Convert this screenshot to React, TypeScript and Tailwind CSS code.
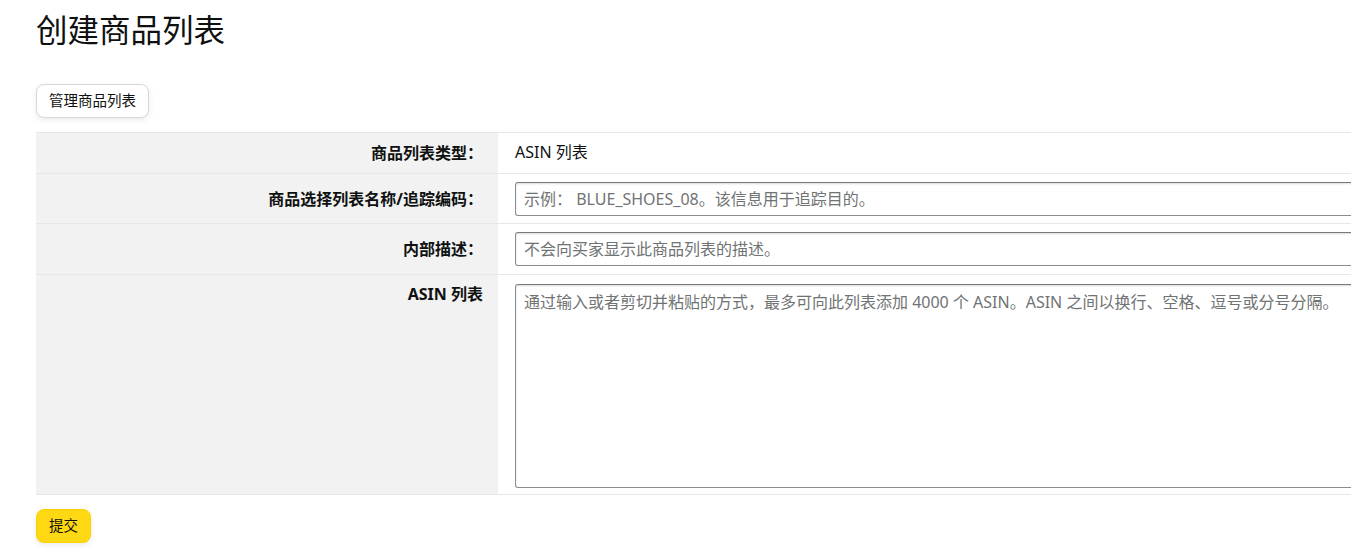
import { useState } from "react";

const font = { fontFamily: '"Noto Sans", "Noto Sans CJK SC", sans-serif' };

const fieldCls =
  "w-[1000px] rounded-[3px] border border-[#888c8c] border-t-[#767a7a] px-[8px] text-[16px] text-[#0f1111] placeholder:text-[#6f7373] shadow-[inset_0_1px_2px_rgba(15,17,17,0.15)] outline-none";

function Row({
  label,
  children,
  className,
  top,
}: {
  label: string;
  children: React.ReactNode;
  className: string;
  top?: boolean;
}) {
  return (
    <div className={`flex border-b border-[#e7e7e7] ${className}`}>
      <div
        className={`w-[462px] shrink-0 bg-[#f2f2f2] pr-[15px] text-right text-[16px] font-bold leading-[22px] text-[#0f1111] flex justify-end ${
          top ? "items-start pt-[8px]" : "items-center"
        }`}
      >
        {label}
      </div>
      <div className={`flex-1 pl-[17px] flex ${top ? "items-start pt-[9px]" : "items-center"}`}>
        {children}
      </div>
    </div>
  );
}

export default function App() {
  const [name, setName] = useState("");
  const [desc, setDesc] = useState("");
  const [asins, setAsins] = useState("");

  return (
    <div className="w-full overflow-hidden bg-white" style={font}>
      <div className="pl-[36px] pt-[10px] w-[1500px]">
        {/* 标题 */}
        <h1 className="text-[31.5px] leading-[40px] font-normal text-[#0f1111]">创建商品列表</h1>

        <button className="mt-[34px] h-[34px] px-[12px] rounded-[8px] border border-[#d5d9d9] bg-white text-[14.5px] text-[#0f1111] shadow-[0_2px_5px_rgba(213,217,217,0.5)]">
          管理商品列表
        </button>

        {/* 表单 */}
        <div className="mt-[14px] border-t border-[#e7e7e7]">
          <Row label="商品列表类型：" className="h-[41px]">
            <span className="text-[16px] leading-[22px] text-[#0f1111] -mt-[2px]">ASIN 列表</span>
          </Row>
          <Row label="商品选择列表名称/追踪编码：" className="h-[50px]">
            <input
              value={name}
              onChange={(e) => setName(e.target.value)}
              placeholder="示例： BLUE_SHOES_08。该信息用于追踪目的。"
              className={`h-[34px] ${fieldCls}`}
            />
          </Row>
          <Row label="内部描述：" className="h-[51px]">
            <input
              value={desc}
              onChange={(e) => setDesc(e.target.value)}
              placeholder="不会向买家显示此商品列表的描述。"
              className={`h-[34px] ${fieldCls}`}
            />
          </Row>
          <Row label="ASIN 列表" className="h-[220px]" top>
            <textarea
              value={asins}
              onChange={(e) => setAsins(e.target.value)}
              placeholder="通过输入或者剪切并粘贴的方式，最多可向此列表添加 4000 个 ASIN。ASIN 之间以换行、空格、逗号或分号分隔。"
              className={`h-[204px] resize-none py-[6px] leading-[22px] ${fieldCls}`}
            />
          </Row>
        </div>

        <button className="mt-[14px] mb-[8px] h-[34px] px-[12px] rounded-[8px] border border-[#fcd200] bg-[#ffd814] text-[14.5px] text-[#0f1111] shadow-[0_2px_5px_rgba(213,217,217,0.5)]">
          提交
        </button>
      </div>
    </div>
  );
}
